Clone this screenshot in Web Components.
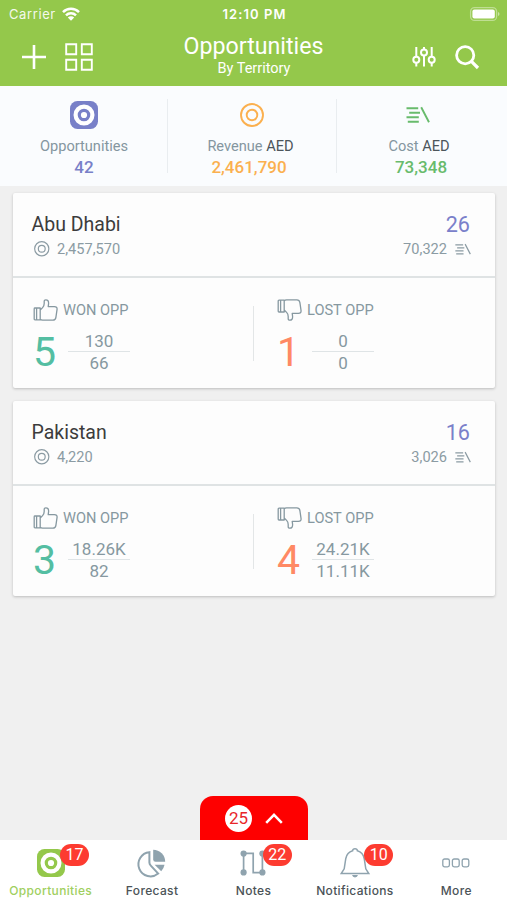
<!DOCTYPE html>
<html lang="en">
<head>
<meta charset="utf-8">
<meta name="viewport" content="width=device-width, initial-scale=1">
<title>Opportunities</title>
<style>
html, body {
  margin: 0;
  height: 100%;
}

body {
  background: #f0f0f0;
  font-family: Roboto, "Liberation Sans", sans-serif;
  overflow: hidden;
}
</style>
</head>
<body>
<opp-screen>
  <app-header slot="header" heading="Opportunities" subheading="By Territory"></app-header>
  <summary-bar slot="summary">
    <summary-item icon="target-solid" label="Opportunities" value="42" style="--accent: #7880c8"></summary-item>
    <summary-item icon="target" label="Revenue" unit="AED" value="2,461,790" style="--accent: #fbb04f"></summary-item>
    <summary-item icon="cost" label="Cost" unit="AED" value="73,348" style="--accent: #68bb6c"></summary-item>
  </summary-bar>
  <territory-card name="Abu Dhabi" revenue="2,457,570" count="26" cost="70,322">
    <opp-metric icon="thumb-up" label="WON OPP" value="5" top="130" bottom="66" style="--accent: #54bea2"></opp-metric>
    <opp-metric icon="thumb-down" label="LOST OPP" value="1" top="0" bottom="0" style="--accent: #ff8964"></opp-metric>
  </territory-card>
  <territory-card name="Pakistan" revenue="4,220" count="16" cost="3,026">
    <opp-metric icon="thumb-up" label="WON OPP" value="3" top="18.26K" bottom="82" style="--accent: #54bea2"></opp-metric>
    <opp-metric icon="thumb-down" label="LOST OPP" value="4" top="24.21K" bottom="11.11K" style="--accent: #ff8964"></opp-metric>
  </territory-card>
  <pull-tab slot="footer">25</pull-tab>
  <tab-bar slot="footer">
    <tab-item icon="target-solid" badge="17" active>Opportunities</tab-item>
    <tab-item icon="pie">Forecast</tab-item>
    <tab-item icon="route" badge="22">Notes</tab-item>
    <tab-item icon="bell" badge="10">Notifications</tab-item>
    <tab-item icon="more">More</tab-item>
  </tab-bar>
</opp-screen>

<script>
// ================================================
// Icons
// ================================================
// Each entry is [width, height, markup]
const ICONS = {
  'plus': [24, 24, '<path d="M12 0V24M0 12H24" stroke-width="2.6"/>'],
  'grid': [28, 28, '<path d="M1.2 1.2H11.2V11.2H1.2ZM16.8 1.2H26.8V11.2H16.8ZM1.2 16.8H11.2V26.8H1.2ZM16.8 16.8H26.8V26.8H16.8Z" stroke-width="1.9"/>'],
  'sliders': [24, 22, '<g stroke-width="2"><path d="M4.3 1V10.6M4.3 17V20.5M12 1V3.2M12 9.6V20.5M19.7 1V10.6M19.7 17V20.5"/><circle cx="4.3" cy="13.8" r="3"/><circle cx="12" cy="6.4" r="3"/><circle cx="19.7" cy="13.8" r="3"/></g>'],
  'search': [24, 24, '<circle cx="10.2" cy="10.2" r="8.6" stroke-width="2.8"/><path d="M16.4 16.4L23 23" stroke-width="3.2"/>'],
  'wifi': [18, 14, '<g stroke-width="2.5"><path d="M1 5.1A11.4 11.4 0 0 1 17 5.1M4 8.3A7.1 7.1 0 0 1 14 8.3"/></g><path d="M9 13.8L5.8 10.5A4.6 4.6 0 0 1 12.2 10.5Z" fill="currentColor" stroke="none"/>'],
  'battery': [30, 14, '<rect x=".6" y=".6" width="26" height="12.8" rx="4" stroke-opacity=".4"/><rect x="2.4" y="2.4" width="22.4" height="9.2" rx="2" fill="currentColor" stroke="none"/><path d="M28 5V9Q29.5 8.3 29.5 7T28 5Z" fill="currentColor" fill-opacity=".5" stroke="none"/>'],
  'target-solid': [28, 28, '<rect width="28" height="28" rx="7.5" fill="currentColor" stroke="none"/><circle cx="14" cy="14" r="8.4" stroke="#fff" stroke-width="4.2"/><circle cx="14" cy="14" r="3.1" fill="#fff" stroke="none"/>'],
  'target': [24, 24, '<circle cx="12" cy="12" r="11"/><circle cx="12" cy="12" r="5.3"/>'],
  'cost': [24, 16, '<path d="M.5 1.2H12.2M3.2 5.7H14M.5 10.2H12.8M1.8 14.7H12.8M15.2 .2L23 15.2"/>'],
  'thumb-up': [25, 22, '<path d="M1.2 9.8Q1.2 9 2 9H7.2V20.8H2Q1.2 20.8 1.2 20ZM3.6 9.2V20.6M7.2 11L9.6 8.6Q11.2 7 11.2 4.6V2.2Q11.2.8 12.8.8Q15.8.8 15.6 4.6L15.2 7.6H21.4Q24.2 7.6 24.1 10.2L22.9 18.4Q22.5 21.2 19.8 21.2H9.6Q8 21.2 7.2 20.2" stroke-linejoin="round"/>'],
  'pie': [28, 28, '<path d="M11.4 3.2A12.1 12.1 0 1 0 20.2 24.6L12.8 16.6Q11.4 15.2 11.4 13.6Z" stroke-width="2"/><path d="M15.2.8A12 12 0 0 1 27.2 12.8H17.5Q15.2 12.8 15.2 10.5Z" fill="currentColor" stroke="none"/><path d="M16.6 15.7H26.5Q26 19.2 23.2 22.2Z" fill="currentColor" stroke="none"/>'],
  'route': [28, 28, '<path d="M4.6 23.2V4.4H14.2V23.6H23.4V4.4" stroke-width="1.7"/><g fill="currentColor" stroke="none"><circle cx="4.6" cy="4.6" r="3.1"/><circle cx="4.6" cy="23.4" r="3.1"/><circle cx="23.4" cy="4.6" r="3.1"/><circle cx="23.4" cy="23.4" r="3.1"/></g>'],
  'bell': [30, 30, '<path d="M12.6 2.8Q12.8.8 15 .8T17.4 2.8Q23 4.4 24.2 10.5L25.8 20.8L28.8 25.6H1.2L4.2 20.8L5.8 10.5Q7 4.4 12.6 2.8Z" stroke-width="1.5"/><path d="M12 27H18Q17.4 29.4 15 29.4T12 27Z" fill="currentColor" stroke="none"/>'],
  'more': [28, 10, '<rect x=".8" y="1" width="6.6" height="7.8" rx="1.8"/><rect x="10.4" y="1" width="6.8" height="7.8" rx="1.8"/><rect x="20.2" y="1" width="6.6" height="7.8" rx="1.8"/>'],
  'chevron': [18, 11, '<path d="M1.2 9.8L9 1.8L16.8 9.8" stroke-width="2.5"/>'],
};
// Same hand, mirrored top to bottom
ICONS['thumb-down'] = [25, 22, `<g transform="matrix(1 0 0 -1 0 22)">${ICONS['thumb-up'][2]}</g>`];


// ================================================
// Base Element
// ================================================
class BaseElement extends HTMLElement {
  connectedCallback() {
    if (this.shadowRoot) return;
    this.attachShadow({ mode: 'open' }).innerHTML = `<style>${this.css()}</style>${this.html()}`;
  }

  attr(name) {
    return this.getAttribute(name) || '';
  }
}


class UiIcon extends BaseElement {
  css() {
    const [w, h] = ICONS[this.attr('name')];
    const width = this.attr('size') || w;
    return `
      :host { display: block; flex: none; width: ${width}px; height: ${width * h / w}px; }
      svg { display: block; width: 100%; height: 100%; overflow: visible; }
    `;
  }

  html() {
    const [w, h, body] = ICONS[this.attr('name')];
    return `<svg viewBox="0 0 ${w} ${h}" fill="none" stroke="currentColor" stroke-width="${this.attr('stroke') || 1.3}">${body}</svg>`;
  }
}


// ================================================
// Header
// ================================================
class AppHeader extends BaseElement {
  css() {
    return `
      :host { display: block; height: 86px; background: #94c84b; color: #fff; }
      .status {
        display: grid; grid-template-columns: 1fr auto 1fr; align-items: center;
        height: 28px; padding: 0 7px 0 9px;
        font: 13px/28px Inter, sans-serif;
      }
      .carrier { display: flex; align-items: center; gap: 6px; letter-spacing: .6px; }
      .carrier span { opacity: .9; }
      .time { font-weight: 600; letter-spacing: 1.05px; }
      .battery { justify-self: end; margin-top: -1px; }
      nav { display: grid; grid-template-columns: 1fr auto 1fr; height: 58px; padding: 0 28px 0 22px; }
      .left, .right { display: flex; align-items: center; height: 58px; }
      .left { gap: 19px; }
      .right { justify-content: flex-end; gap: 19px; }
      .titles { padding-left: 6px; text-align: center; }
      h1 { margin: 4px 0 0; font-size: 23.2px; font-weight: 400; line-height: 28px; }
      p { margin: 0; padding-left: 1px; font-size: 14.5px; line-height: 18px; }
    `;
  }

  html() {
    return `
      <div class="status">
        <div class="carrier"><span>Carrier</span><ui-icon name="wifi"></ui-icon></div>
        <div class="time">12:10 PM</div>
        <ui-icon class="battery" name="battery"></ui-icon>
      </div>
      <nav>
        <div class="left"><ui-icon name="plus"></ui-icon><ui-icon name="grid"></ui-icon></div>
        <div class="titles"><h1>${this.attr('heading')}</h1><p>${this.attr('subheading')}</p></div>
        <div class="right"><ui-icon name="sliders"></ui-icon><ui-icon name="search"></ui-icon></div>
      </nav>
    `;
  }
}


// ================================================
// Summary
// ================================================
class SummaryBar extends BaseElement {
  css() {
    return `
      :host {
        display: grid; grid-template-columns: 168px 169px 162px;
        height: 100px; box-sizing: border-box; padding-top: 1px;
        background: #fafcfe;
      }
      ::slotted(:not(:last-child)) { border-right: 1px solid #e9edf0; }
      ::slotted(:first-child) { padding-left: 1px; }
    `;
  }

  html() {
    return '<slot></slot>';
  }
}


class SummaryItem extends BaseElement {
  css() {
    return `
      :host { display: block; height: 74px; margin-top: 12px; text-align: center; }
      .icon { display: grid; place-items: center; height: 31px; color: var(--accent); }
      .label { margin-top: 6px; font-size: 14.6px; line-height: 21px; color: #8496a0; }
      .label b { font-weight: 400; color: #4c555b; }
      .value { font-size: 17px; font-weight: 500; line-height: 20px; color: var(--accent); }
      :host([icon="target"]) .label { margin-right: 3px; }
      :host([icon="target"]) .value { margin-right: 6px; }
      :host([icon="cost"]) .label { padding-left: 2px; }
      :host([icon="cost"]) .value { padding-left: 6px; }
    `;
  }

  html() {
    const unit = this.attr('unit');
    return `
      <div class="icon"><ui-icon name="${this.attr('icon')}" stroke="1.9"></ui-icon></div>
      <div class="label">${this.attr('label')}${unit && ` <b>${unit}</b>`}</div>
      <div class="value">${this.attr('value')}</div>
    `;
  }
}


// ================================================
// Territory Cards
// ================================================
class TerritoryCard extends BaseElement {
  css() {
    return `
      :host {
        display: block; height: 195px; border-radius: 2px;
        background: #fdfdfd; box-shadow: 0 1px 3px rgba(0, 0, 0, .22);
      }
      header {
        display: flex; justify-content: space-between;
        box-sizing: border-box; height: 85px; padding: 19px 25px 0 18.5px;
        border-bottom: 2px solid #dfe3e4;
      }
      h2 { margin: 0; font-size: 19.5px; font-weight: 400; line-height: 26px; color: #3c3c3c; }
      .count { font-size: 21.6px; line-height: 26px; text-align: right; color: #7a80ca; }
      .sub { display: flex; align-items: center; height: 22px; font-size: 14.6px; color: #8b9ba3; }
      .revenue { gap: 8px; padding-left: 2px; }
      .cost { gap: 8px; margin-right: -1px; }
      section { display: grid; grid-template-columns: 240px 1fr; padding-top: 21px; }
      ::slotted(*) { margin-left: 20px; }
      ::slotted(:last-child) { margin-left: 0 !important; padding-left: 23px; border-left: 1px solid #e3e6e7; }
    `;
  }

  html() {
    return `
      <header>
        <div>
          <h2>${this.attr('name')}</h2>
          <div class="sub revenue"><ui-icon name="target" size="15.5" stroke="1.8"></ui-icon><span>${this.attr('revenue')}</span></div>
        </div>
        <div>
          <div class="count">${this.attr('count')}</div>
          <div class="sub cost"><span>${this.attr('cost')}</span><ui-icon name="cost" size="16" stroke="1.8"></ui-icon></div>
        </div>
      </header>
      <section><slot></slot></section>
    `;
  }
}


class OppMetric extends BaseElement {
  css() {
    return `
      :host { display: block; height: 55px; margin-top: 7px; color: #8698a0; }
      .wrap { margin-top: -7px; }
      .label { display: flex; align-items: center; gap: 5px; height: 22px; font-size: 14.6px; line-height: 22px; }
      .figures { display: flex; }
      .value { width: 35px; margin-top: 7px; font-size: 41px; line-height: 48px; color: var(--accent); }
      .fraction { width: 62px; margin-top: 10px; font-size: 17px; line-height: 20px; text-align: center; }
      .fraction div:first-child { border-bottom: 1px solid #dfe4e6; }
      .fraction div:last-child { padding-top: 1px; }
    `;
  }

  html() {
    return `
      <div class="wrap">
        <div class="label"><ui-icon name="${this.attr('icon')}"></ui-icon><span>${this.attr('label')}</span></div>
        <div class="figures">
          <div class="value">${this.attr('value')}</div>
          <div class="fraction"><div>${this.attr('top')}</div><div>${this.attr('bottom')}</div></div>
        </div>
      </div>
    `;
  }
}


// ================================================
// Footer
// ================================================
class PullTab extends BaseElement {
  css() {
    return `
      :host {
        display: flex; align-items: center; justify-content: center; gap: 13px;
        width: 108px; height: 44px; margin-left: 200px;
        border-radius: 13px 13px 0 0; background: #fe0000; color: #fff;
      }
      .count {
        width: 27px; height: 27px; border-radius: 50%;
        background: #fff; color: #e8262a;
        font-size: 17px; line-height: 27px; text-align: center;
      }
    `;
  }

  html() {
    return '<div class="count"><slot></slot></div><ui-icon name="chevron"></ui-icon>';
  }
}


class TabBar extends BaseElement {
  css() {
    return `
      :host { display: grid; grid-template-columns: repeat(5, 1fr); height: 60px; background: #fff; }
    `;
  }

  html() {
    return '<slot></slot>';
  }
}


class TabItem extends BaseElement {
  css() {
    return `
      :host { display: block; position: relative; text-align: center; color: #8fa3ae; }
      :host([active]) { color: #94c84b; }
      .icon { display: grid; place-items: center; height: 46px; }
      .label { white-space: nowrap; font: 500 12px/10px Inter, sans-serif; letter-spacing: .35px; color: #4b5357; }
      :host([active]) .label { color: #a0cf60; }
      .badge {
        position: absolute; left: 60px; top: 4px;
        width: 29px; height: 22px; border-radius: 11px;
        background: #fd3b30; color: #fff;
        font-size: 16px; line-height: 22px;
      }
    `;
  }

  html() {
    const badge = this.attr('badge');
    return `
      <div class="icon"><ui-icon name="${this.attr('icon')}"></ui-icon></div>
      <div class="label"><slot></slot></div>
      ${badge && `<div class="badge">${badge}</div>`}
    `;
  }
}


// ================================================
// Screen
// ================================================
class OppScreen extends BaseElement {
  css() {
    return `
      :host { display: flex; flex-direction: column; width: 507px; height: 900px; background: #f0f0f0; }
      main { flex: 1; display: flex; flex-direction: column; gap: 13px; padding: 7px 12px 0 13px; }
    `;
  }

  html() {
    return `
      <slot name="header"></slot>
      <slot name="summary"></slot>
      <main><slot></slot></main>
      <slot name="footer"></slot>
    `;
  }
}

customElements.define('ui-icon', UiIcon);
customElements.define('app-header', AppHeader);
customElements.define('summary-bar', SummaryBar);
customElements.define('summary-item', SummaryItem);
customElements.define('territory-card', TerritoryCard);
customElements.define('opp-metric', OppMetric);
customElements.define('pull-tab', PullTab);
customElements.define('tab-bar', TabBar);
customElements.define('tab-item', TabItem);
customElements.define('opp-screen', OppScreen);
</script>
</body>
</html>
